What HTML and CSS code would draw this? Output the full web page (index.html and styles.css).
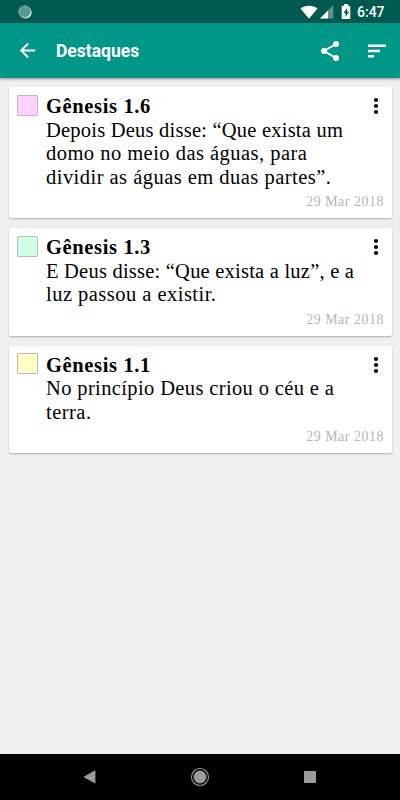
FILE: index.html
```html
<!DOCTYPE html>
<html lang="pt">
<head>
    <meta charset="UTF-8">
    <meta name="viewport" content="width=device-width, initial-scale=1.0">
    <title>Destaques</title>
    <link rel="stylesheet" href="styles.css">
</head>
<body>
    <div class="status">
        <svg class="sync" width="16" height="16" viewBox="0 0 16 16">
            <circle cx="8.4" cy="8.4" r="6.2" fill="#fff"/>
            <circle cx="7.6" cy="7.6" r="6.2" fill="#5d968f"/>
            <circle cx="7.6" cy="7.6" r="5.8" fill="none" stroke="#a9c9c5" stroke-width="1" stroke-dasharray="1 1"/>
        </svg>
        <svg class="wifi" width="18" height="14" viewBox="0 0 18 14">
            <path d="M.5 3.6C5.2-.2 12.8-.2 17.5 3.6L9 13.8z" fill="#fff"/>
        </svg>
        <svg class="signal" width="14" height="14" viewBox="0 0 14 14">
            <path d="M13.3 0v13.6H0z" fill="#5c958f"/>
            <path d="M8 5.5v8.1H0z" fill="#fff"/>
        </svg>
        <svg class="battery" width="10" height="16" viewBox="0 0 10 16">
            <path d="M3 0h4v1.8h1.6q.7 0 .7.7v11.8q0 .7-.7.7H1.4q-.7 0-.7-.7V2.5q0-.7.7-.7H3z" fill="#fff"/>
            <path d="M6 4L2.5 9h2v4L8 7.7H6z" fill="#00594f"/>
        </svg>
        <span class="clock">6:47</span>
    </div>

    <div class="toolbar">
        <svg class="back" width="24" height="24" viewBox="0 0 24 24">
            <path d="M20 11H7.83l5.59-5.59L12 4l-8 8 8 8 1.41-1.41L7.83 13H20z" fill="#fff"/>
        </svg>
        <h1>Destaques</h1>
        <svg class="share" width="24" height="24" viewBox="0 0 24 24">
            <path d="M18 5L6 12l12 7" fill="none" stroke="#fff" stroke-width="2"/>
            <circle cx="18" cy="5" r="3" fill="#fff"/>
            <circle cx="6" cy="12" r="3" fill="#fff"/>
            <circle cx="18" cy="19" r="3" fill="#fff"/>
        </svg>
        <svg class="sort" width="24" height="24" viewBox="0 0 24 24">
            <path d="M3 18.5h6V16H3zM3 5.5V8h18V5.5zM3 13.2h12v-2.5H3z" fill="#fff"/>
        </svg>
    </div>

    <div class="list">
        <div class="card">
            <div class="color pink"></div>
            <div class="content">
                <h2>Gênesis 1.6</h2>
                <p><span class="tight">Depois Deus disse: “Que exista um</span><br><span class="wide">domo no meio das águas, para</span><br><span class="wide">dividir as águas em duas partes”.</span></p>
                <div class="date">29 Mar 2018</div>
            </div>
            <svg class="more" width="6" height="18" viewBox="0 0 6 18">
                <circle cx="3" cy="3" r="2.1"/><circle cx="3" cy="9" r="2.1"/><circle cx="3" cy="15" r="2.1"/>
            </svg>
        </div>

        <div class="card">
            <div class="color green"></div>
            <div class="content">
                <h2>Gênesis 1.3</h2>
                <p><span class="tight">E Deus disse: “Que exista a luz”, e a</span><br><span class="wide">luz passou a existir.</span></p>
                <div class="date">29 Mar 2018</div>
            </div>
            <svg class="more" width="6" height="18" viewBox="0 0 6 18">
                <circle cx="3" cy="3" r="2.1"/><circle cx="3" cy="9" r="2.1"/><circle cx="3" cy="15" r="2.1"/>
            </svg>
        </div>

        <div class="card">
            <div class="color yellow"></div>
            <div class="content">
                <h2>Gênesis 1.1</h2>
                <p>No princípio Deus criou o céu e a<br><span class="wide">terra.</span></p>
                <div class="date">29 Mar 2018</div>
            </div>
            <svg class="more" width="6" height="18" viewBox="0 0 6 18">
                <circle cx="3" cy="3" r="2.1"/><circle cx="3" cy="9" r="2.1"/><circle cx="3" cy="15" r="2.1"/>
            </svg>
        </div>
    </div>

    <div class="navbar">
        <svg width="14" height="16" viewBox="0 0 14 16">
            <path d="M12.4 2v12q0 .6-.6.3L1.2 8.4q-.6-.4 0-.8L11.8 1.6q.6-.3.6.4z" fill="#9b9b9b"/>
        </svg>
        <svg width="20" height="20" viewBox="0 0 20 20">
            <circle cx="10" cy="10" r="8.5" fill="none" stroke="#9b9b9b" stroke-width="1.1"/>
            <circle cx="10" cy="10" r="6.4" fill="#9b9b9b"/>
        </svg>
        <svg width="14" height="14" viewBox="0 0 14 14">
            <rect x="1" y="1" width="12" height="12" rx="1" fill="#9b9b9b"/>
        </svg>
    </div>
</body>
</html>
```
FILE: styles.css
```css
*{
    margin: 0;
    padding: 0;
    box-sizing: border-box;
}
body{
    display: flex;
    flex-direction: column;
    height: 800px;
    overflow: hidden;
    background-color: #efefef;
    font-family: Roboto, sans-serif;
}
svg{
    flex: none;
    display: block;
}
.status{
    display: flex;
    align-items: center;
    height: 23px;
    padding-left: 17px;
    background-color: #00594f;
    color: #fff;
}
.wifi{
    margin-left: 267px;
}
.signal{
    margin-left: 2px;
}
.battery{
    margin-left: 7px;
}
.clock{
    margin-left: 6px;
    font-size: 14px;
    font-weight: 500;
    line-height: 24px;
}
.toolbar{
    display: flex;
    align-items: center;
    height: 55px;
    padding: 0 11px 0 16px;
    background-color: #009688;
    color: #fff;
    box-shadow: 0 1px 3px rgba(0,0,0,.4);
}
.back{
    width: 23px;
    height: 23px;
}
.toolbar h1{
    flex: 1;
    margin-left: 17px;
    font-size: 17.5px;
    font-weight: 700;
}
.sort{
    margin-left: 23px;
}
.list{
    flex: 1;
    display: flex;
    flex-direction: column;
    gap: 10px;
    padding: 9px 8px 0 9px;
}
.card{
    display: flex;
    padding: 8px 8px 7px;
    background-color: #fff;
    border-radius: 2px;
    box-shadow: 0 1px 2px rgba(0,0,0,.28);
    font-family: "Liberation Serif", serif;
    color: #000;
}
.color{
    width: 21px;
    height: 21px;
    margin-top: -.5px;
    border: 1px solid #bbb;
    border-radius: 1px;
}
.pink{
    background-color: #ffd0ff;
}
.green{
    background-color: #d0ffe6;
}
.yellow{
    background-color: #ffffc8;
}
.content{
    flex: 1;
    margin-left: 8px;
    white-space: nowrap;
}
.card h2{
    font-size: 20.5px;
    line-height: 23.5px;
    letter-spacing: .64px;
}
.card p{
    font-size: 20.5px;
    line-height: 23.5px;
    letter-spacing: .37px;
}
.card .tight{
    letter-spacing: .22px;
}
.card .wide{
    letter-spacing: .47px;
}
.date{
    margin-top: 4px;
    margin-right: -11px;
    font-size: 14px;
    line-height: 18px;
    letter-spacing: .5px;
    text-align: right;
    color: #b5b5b5;
}
.more{
    margin: 2px 5px 0 0;
}
.navbar{
    display: flex;
    align-items: center;
    justify-content: space-between;
    height: 46px;
    padding: 0 83px;
    background-color: #000;
}
```
